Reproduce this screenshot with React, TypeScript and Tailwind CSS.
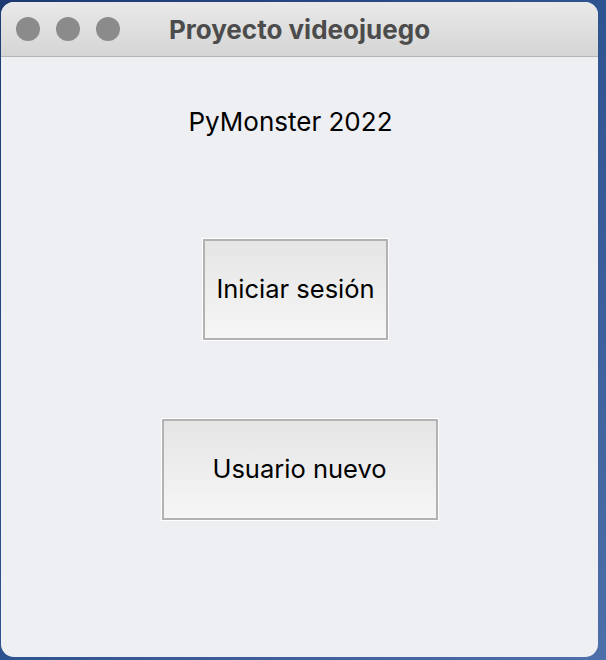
import React from 'react';

function TrafficLights() {
  return (
    <div className="flex items-center gap-4 pl-[15px]">
      <span className="w-6 h-6 rounded-full bg-[#8b8b8b]" />
      <span className="w-6 h-6 rounded-full bg-[#8b8b8b]" />
      <span className="w-6 h-6 rounded-full bg-[#8b8b8b]" />
    </div>
  );
}

function WindowButton({ label, width, shift }: { label: string; width: string; shift: string }) {
  return (
    <button className={`${width} ${shift} h-[103px] p-px bg-white`}>
      <div className="w-full h-full border-2 border-[#b2b2b2] bg-gradient-to-b from-[#e5e5e5] to-[#f6f6f6] flex items-center justify-center text-[25.5px] text-black">
        {label}
      </div>
    </button>
  );
}

export default function App() {
  return (
    <div
      className="w-[606px] h-[660px] bg-gradient-to-br from-[#1d3a72] via-[#2f5390] to-[#4d6faa] pt-[2px] pl-px"
      style={{ fontFamily: 'Inter, "Liberation Sans", sans-serif' }}
    >
      <div className="w-[597px] h-[655px] rounded-[13px] overflow-hidden bg-[#eeeff3] flex flex-col">
        {/* title bar */}
        <div className="relative h-[55px] shrink-0 flex items-center bg-gradient-to-b from-[#e9e9e9] to-[#d5d5d5] border-b border-[#b5b5b5]">
          <TrafficLights />
          <div className="absolute inset-0 flex items-center justify-center font-bold text-[26px] text-[#4c4c4c]">
            Proyecto videojuego
          </div>
        </div>

        {/* content */}
        <div className="flex-1 flex flex-col items-center">
          <div className="mt-[50px] mr-[18px] leading-[30px] text-[26px] text-black">PyMonster 2022</div>
          <div className="mt-[101px]">
            <WindowButton label="Iniciar sesión" width="w-[187px]" shift="mr-[8px]" />
          </div>
          <div className="mt-[77px]">
            <WindowButton label="Usuario nuevo" width="w-[278px]" shift="" />
          </div>
        </div>
      </div>
    </div>
  );
}
